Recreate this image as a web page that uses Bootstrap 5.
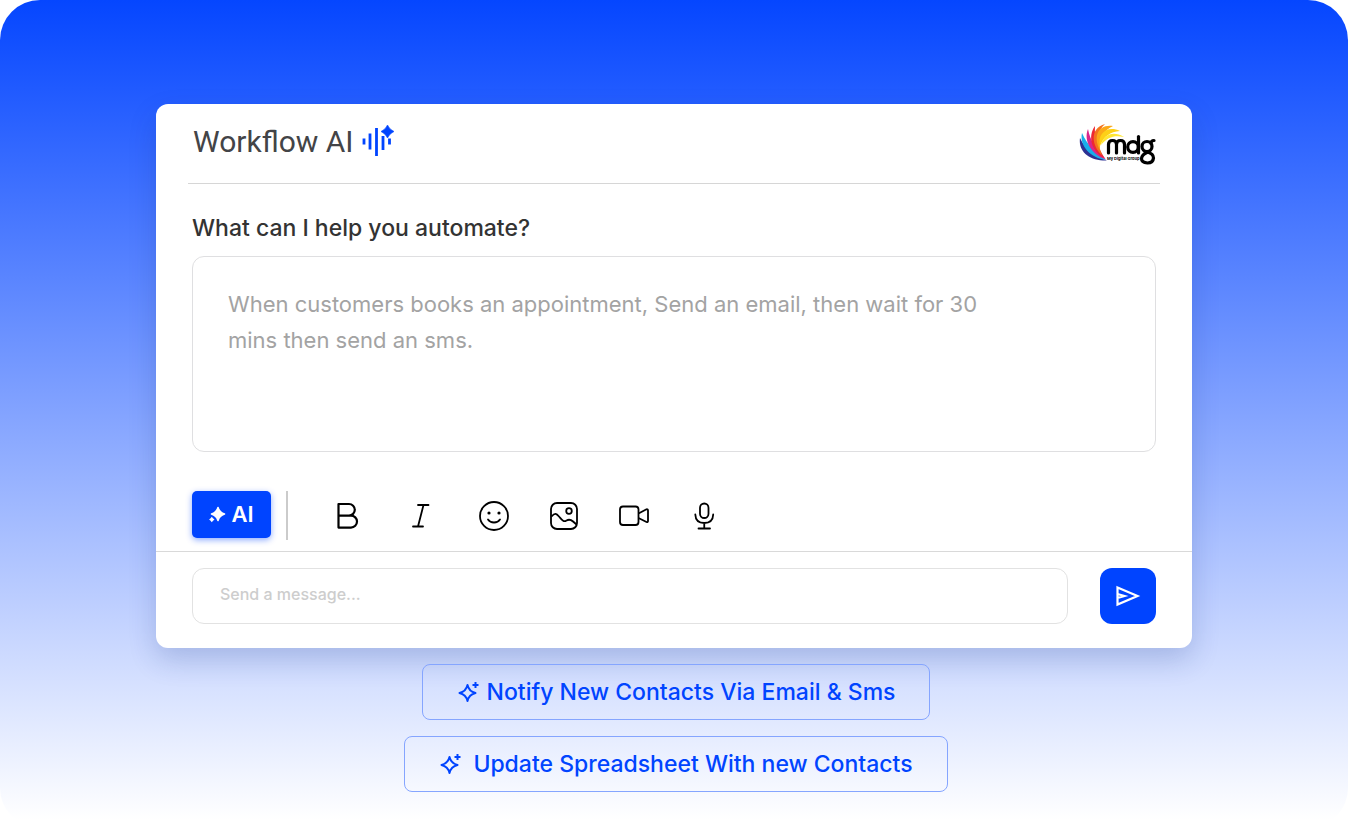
<!DOCTYPE html>
<html lang="en">
<head>
<meta charset="utf-8">
<meta name="viewport" content="width=device-width, initial-scale=1">
<title>Workflow AI</title>
<link href="https://cdn.jsdelivr.net/npm/bootstrap@5.3.0/dist/css/bootstrap.min.css" rel="stylesheet">
<style>
  :root { --brand: #0044ff; }
  body { font-family: Inter, "Liberation Sans", sans-serif; background: #fff; }
  svg { display: block; flex: none; }
  .stage {
    min-height: 100vh;
    padding: 104px 24px 36px;
    border-radius: 40px;
    background: linear-gradient(#0546ff, #fff 99%);
  }
  .panel {
    max-width: 1036px;
    border-radius: 12px;
    box-shadow: 0 12px 28px rgba(20, 50, 130, .2);
  }
  .panel-head { margin: 0 32px; padding: 0 4px 0 5px; height: 80px; border-bottom: 1px solid #d6d6d6; }
  .panel-brand { gap: 5px; padding-bottom: 4px; }
  .panel-title { font-family: Roboto, sans-serif; font-size: 30px; line-height: 36px; font-weight: 400; color: #434447; }
  .panel-body { padding: 28px 36px 11px; }
  .prompt-label { font-size: 23px; line-height: 32px; font-weight: 500; color: #333; margin-bottom: 12px; }
  .prompt-box {
    height: 196px; padding: 29px 150px 28px 35px; resize: none;
    font-size: 22px; line-height: 36px;
    border: 1px solid #dfdfe1; border-radius: 12px;
  }
  .prompt-box::placeholder { color: #a3a3a3; opacity: 1; }
  .toolbar { margin-top: 39px; height: 49px; }
  .ai-btn {
    width: 79px; height: 47px; padding: 0; font-size: 22px; font-weight: 600;
    color: #fff; background: var(--brand); border: 0; border-radius: 5px;
    box-shadow: 0 2px 6px rgba(0, 68, 255, .45);
  }
  .ai-btn:hover, .send-btn:hover { color: #fff; background: #0038d6; }
  .rule { width: 2px; height: 49px; background: #cbcbcb; margin: 0 46px 0 15px; }
  .tool { width: 40px; height: 40px; padding: 0; color: #000; border: 0; }
  .tools { column-gap: 30px; }
  .composer { padding: 16px 36px 24px; border-top: 1px solid #d9d9d9; gap: 32px; }
  .message-box {
    height: 56px; padding: 0 27px 4px; font-size: 16px; font-weight: 500;
    border: 1px solid #e2e2e2; border-radius: 12px;
  }
  .message-box::placeholder { color: #cdcdcd; opacity: 1; }
  .send-btn { width: 56px; height: 56px; padding: 0; color: #fff; background: var(--brand); border: 0; border-radius: 12px; flex: none; }
  .suggest {
    height: 56px; padding: 0 34px; gap: 8px; font-size: 23px; font-weight: 500;
    color: var(--brand); border: 1px solid #85a5ff; border-radius: 8px;
  }
  .suggest-wide { gap: 12px; }
  .suggest:hover { color: var(--brand); background: #fff; border-color: var(--brand); }
  .wordmark { font-family: Inter, sans-serif; }
</style>
</head>
<body>
<main class="stage">
  <section class="panel bg-white mx-auto">
    <header class="panel-head d-flex align-items-center justify-content-between">
      <div class="panel-brand d-flex align-items-center">
        <h1 class="panel-title m-0">Workflow AI</h1>
        <svg width="36" height="36" viewBox="0 0 36 36" fill="none" stroke="#0044ff" stroke-width="2.800" aria-hidden="true">
          <path d="M5 14.500v6M11 9.500v16M17.500 4v28M24 12v14M30.500 14.500v6" />
          <path d="M28.500 1Q30.500 5.500 35 7.500Q30.500 9.500 28.500 14Q26.500 9.500 22 7.500Q26.500 5.500 28.500 1Z" fill="#0044ff" stroke="#0044ff" stroke-width=".6"/>
        </svg>
      </div>
      <svg class="wordmark" width="77" height="42" viewBox="0 0 77 42" role="img" aria-label="mdg My Digital Group">
        <path d="M1 15C-1 29 11 38 28 37.500C16 33 6 26 1 15Z" fill="#2e3192"/>
        <path d="M3 10C0 23 12 35 27 37C17 30 8 22 3 10Z" fill="#19aeea"/>
        <path d="M9 6C4 18 13 32 27 36.500C18 27 11 18 9 6Z" fill="#d9258c"/>
        <path d="M16 3C8 14 13 29 26 35.500C19 25 15 15 16 3Z" fill="#ed2833"/>
        <path d="M26 1C10 5 13 24 23 32C18 19 18 8 26 1Z" fill="#f4731f"/>
        <path d="M34 3C18 1 14 15 21 27C20 15 25 7 34 3Z" fill="#fba918"/>
        <path d="M41 8C28 2 18 11 21 23C25 13 31 9 41 8Z" fill="#fdd017"/>
        <path d="M45 14C34 7 24 12 22 22C29 14 35 12 45 14Z" fill="#ffe633"/>
        <g fill="none" stroke="#000" stroke-width="3.200" stroke-linecap="round">
          <path d="M29.500 30V21.500Q29.500 17.500 33.500 17.500Q37.500 17.500 37.500 21.500V30M37.500 21.500Q37.500 17.500 41.500 17.500Q45.500 17.500 45.500 21.500V30"/>
          <circle cx="54" cy="24" r="5.300"/><path d="M59.500 13.500V30"/>
          <circle cx="68" cy="23.500" r="5"/>
          <path d="M75 17.500Q72 17.500 72 20.500M68 29Q74.500 30.500 74.500 35Q74 40 68.500 40Q62.500 39.500 62.500 35.500Q63 31.500 68 29.500"/>
        </g>
        <text x="28" y="37" font-size="4" font-weight="700" fill="#000">My Digital Group</text>
      </svg>
    </header>

    <div class="panel-body">
      <label class="prompt-label d-block" for="prompt">What can I help you automate?</label>
      <textarea id="prompt" class="prompt-box form-control" placeholder="When customers books an appointment, Send an email, then wait for 30 mins then send an sms."></textarea>

      <div class="toolbar d-flex align-items-start">
        <button type="button" class="ai-btn btn d-flex align-items-center justify-content-center gap-1">
          <svg width="18" height="18" viewBox="0 0 18 18" fill="#fff" aria-hidden="true">
            <path d="M9 1.500Q10.500 6.500 15.500 8Q10.500 9.500 9 14.500Q7.500 9.500 2.500 8Q7.500 6.500 9 1.500Z" stroke="#fff" stroke-width="1.600" stroke-linejoin="round"/>
            <path d="M2.800 10.800L4 12.300L5.500 13.500L4 14.700L2.800 16.200L1.600 14.700L.1 13.500L1.600 12.300Z"/>
          </svg>
          <span>AI</span>
        </button>
        <span class="rule"></span>
        <div class="tools d-flex align-items-center h-100">
          <button type="button" class="tool btn" aria-label="Bold">
            <svg width="40" height="40" viewBox="0 0 40 40" fill="none" stroke="currentColor" stroke-width="2.200" stroke-linejoin="round"><path d="M4.500 8H15a5.800 5.800 0 0 1 0 11.600H4.500ZM4.500 19.600H17a6 6 0 0 1 0 12H4.500Z"/></svg>
          </button>
          <button type="button" class="tool btn" aria-label="Italic">
            <svg width="40" height="40" viewBox="0 0 40 40" fill="none" stroke="currentColor" stroke-width="1.800" stroke-linecap="round"><path d="M14 9H24.500M9 30.500H19M19.500 9L14 30.500"/></svg>
          </button>
          <button type="button" class="tool btn" aria-label="Emoji">
            <svg width="40" height="40" viewBox="0 0 40 40" fill="none" stroke="currentColor" stroke-width="1.800" stroke-linecap="round"><circle cx="20" cy="20" r="14"/><path d="M14 23.500Q16 26.500 20 26.500Q24 26.500 26 23.500"/><circle cx="15" cy="17" r="1.600" fill="currentColor" stroke="none"/><circle cx="25" cy="17" r="1.600" fill="currentColor" stroke="none"/></svg>
          </button>
          <button type="button" class="tool btn" aria-label="Image">
            <svg width="40" height="40" viewBox="0 0 40 40" fill="none" stroke="currentColor" stroke-width="1.800" stroke-linejoin="round"><path d="M20 7C31 7 33 8.500 33 20S31 33 20 33S7 31.500 7 20S9 7 20 7Z" stroke="none"/><rect x="7" y="7" width="26" height="26" rx="6"/><circle cx="25" cy="15" r="2.800"/><path d="M7.500 20.500C11 16.500 12.500 17.500 15 20.500C18 24 19.500 26.500 22.500 24.500C26 22.500 28 24.500 32.500 28.500"/></svg>
          </button>
          <button type="button" class="tool btn" aria-label="Video">
            <svg width="40" height="40" viewBox="0 0 40 40" fill="none" stroke="currentColor" stroke-width="1.800" stroke-linejoin="round"><rect x="6" y="10.500" width="18.500" height="18.500" rx="3"/><path d="M24.500 17.500L32.500 13.300Q34 13 34 14.500V25Q34 26.500 32.500 26L24.500 22"/></svg>
          </button>
          <button type="button" class="tool btn" aria-label="Voice">
            <svg width="40" height="40" viewBox="0 0 40 40" fill="none" stroke="currentColor" stroke-width="1.800" stroke-linecap="round"><rect x="16" y="7.500" width="8.500" height="14.500" rx="4.250"/><path d="M11.300 18.500C11.500 24 15 27 20.250 27S29 24 29.200 18.500M20.250 27V32M14.500 32.500H26"/></svg>
          </button>
        </div>
      </div>
    </div>

    <form class="composer d-flex align-items-center">
      <input type="text" class="message-box form-control" aria-label="Message" placeholder="Send a message...">
      <button type="button" class="send-btn btn d-flex align-items-center justify-content-center" aria-label="Send">
        <svg width="26" height="24" viewBox="0 0 26 24" fill="none" stroke="currentColor" stroke-width="2.200"><path d="M2.500 3.500L22.500 12L2.500 20.500ZM2.500 10L9.500 12L2.500 14"/></svg>
      </button>
    </form>
  </section>

  <div class="d-flex flex-column align-items-center gap-3 mt-3 ps-1">
    <button type="button" class="suggest btn d-flex align-items-center">
      <svg width="22" height="22" viewBox="0 0 22 22" fill="none" stroke="currentColor" stroke-width="2" stroke-linejoin="round" aria-hidden="true"><path d="M10.500 4Q12 10.500 18.500 12Q12 13.500 10.500 20Q9 13.500 2.500 12Q9 10.500 10.500 4ZM18.500 1V7M15.500 4H21.500"/></svg>
      <span>Notify New Contacts Via Email &amp; Sms</span>
    </button>
    <button type="button" class="suggest suggest-wide btn d-flex align-items-center">
      <svg width="22" height="22" viewBox="0 0 22 22" fill="none" stroke="currentColor" stroke-width="2" stroke-linejoin="round" aria-hidden="true"><path d="M10.500 4Q12 10.500 18.500 12Q12 13.500 10.500 20Q9 13.500 2.500 12Q9 10.500 10.500 4ZM18.500 1V7M15.500 4H21.500"/></svg>
      <span>Update Spreadsheet With new Contacts</span>
    </button>
  </div>
</main>
<script src="https://cdn.jsdelivr.net/npm/bootstrap@5.3.0/dist/js/bootstrap.bundle.min.js"></script>
</body>
</html>
